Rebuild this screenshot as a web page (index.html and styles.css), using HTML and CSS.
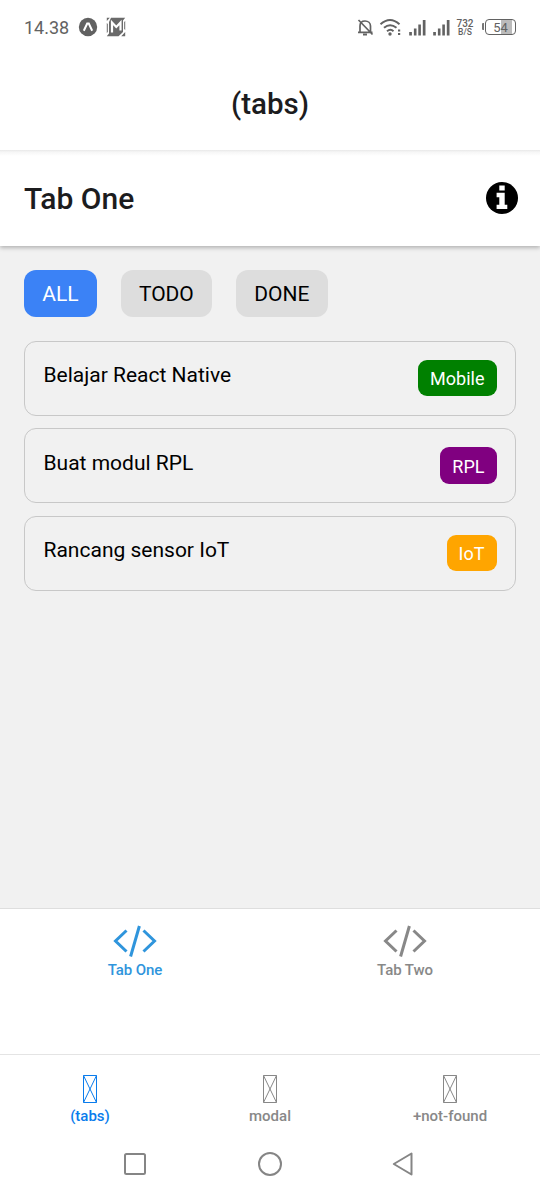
FILE: index.html
```html
<!DOCTYPE html>
<html lang="id">
<head>
<meta charset="utf-8">
<meta name="viewport" content="width=device-width, initial-scale=1">
<title>Tab One</title>
<link rel="stylesheet" href="styles.css">
</head>
<body>
<div class="screen">
  <div class="status">
    <div class="status-left">
      <span class="clock">14.38</span>
      <svg class="app-icon" width="20" height="20" viewBox="0 0 20 20"><circle cx="10" cy="10" r="9.2" fill="#616161"/><path d="M5.8 13.8 9.2 6.6h1.6l3.4 7.2" fill="none" stroke="#fff" stroke-width="2"/></svg>
      <svg class="app-icon-m" width="20" height="20" viewBox="0 0 20 20"><path d="M5 .8h14.200L17 3.500v11.500L12.500 19.200H.8L3 16.500V5z" fill="#6a6a6a"/><path d="M.8.800h3L.8 4zM.8 6l1 1v8l-1 1zM19.200 4v9l-1-1V5zM19.200 15v4.200h-4z" fill="#6a6a6a"/><path d="M6 15.500V5.500l4.300 4.500 4.200-4.500v8" fill="none" stroke="#fff" stroke-width="2.200"/></svg>
    </div>
    <div class="status-right">
      <svg width="17" height="19" viewBox="0 0 17 19" fill="none" stroke="#626262" stroke-width="1.700"><path d="M3 14V8c0-3 2-5 5-5s5.500 2 5.500 5v6M1 14.300h14.500M1.500 2l14 14.500"/><path d="M6 16.500h4" stroke-width="2"/></svg>
      <svg class="wifi" width="22" height="19" viewBox="0 0 22 19" fill="none" stroke="#626262" stroke-width="2"><path d="M.5 6.200q9.500-8.500 19 0M4 9.800q6-5.200 12.500 0M7 13.200q3.500-2.800 6.500 0"/><circle cx="10" cy="16" r="1.700" fill="#626262" stroke="none"/><path d="M18 12.500h2.200M18 16h2.200"/></svg>
      <svg class="signal" width="17" height="17" viewBox="0 0 17 17" fill="#626262"><path d="M.2 13H2.900v3.500H.2zM4.900 9.500h2.600v7H4.900zM9.300 5.500h2.600v11H9.300zM13.800 1h2.700v15.500h-2.700z"/></svg>
      <svg class="signal" width="17" height="17" viewBox="0 0 17 17" fill="#626262"><path d="M.2 13H2.900v3.500H.2zM4.900 9.500h2.600v7H4.900zM9.300 5.500h2.600v11H9.300zM13.800 1h2.700v15.500h-2.700z"/></svg>
      <div class="speed"><span>732</span><span>B/S</span></div>
      <div class="battery"><span>54</span></div>
    </div>
  </div>

  <header class="root-header"><h1>(tabs)</h1></header>
  <header class="tab-header">
    <h2>Tab One</h2>
    <svg width="32" height="32" viewBox="0 0 32 32"><circle cx="16" cy="16" r="16"/><path d="M13.300 3.500h5.400v5h-5.400zM10.600 10.800h8.100v11.900h2.600V27H10.600v-4.300h2.700v-7.500h-2.700z" fill="#fff"/></svg>
  </header>

  <main class="content">
    <div class="filters">
      <button class="filter active">ALL</button>
      <button class="filter">TODO</button>
      <button class="filter">DONE</button>
    </div>
    <div class="card"><span class="task">Belajar React Native</span><span class="tag mobile">Mobile</span></div>
    <div class="card"><span class="task">Buat modul RPL</span><span class="tag rpl">RPL</span></div>
    <div class="card"><span class="task">Rancang sensor IoT</span><span class="tag iot">IoT</span></div>
  </main>

  <nav class="inner-tabs">
    <div class="tab selected">
      <svg width="44" height="34" viewBox="0 0 44 34" fill="none" stroke="currentColor" stroke-width="3"><path d="M13.500 6.500 2.500 17l11 10.500M30.500 6.500l11 10.500-11 10.500M26.400 2 17.600 32.500"/></svg>
      <span>Tab One</span>
    </div>
    <div class="tab">
      <svg width="44" height="34" viewBox="0 0 44 34" fill="none" stroke="currentColor" stroke-width="3"><path d="M13.500 6.500 2.500 17l11 10.500M30.500 6.500l11 10.500-11 10.500M26.400 2 17.600 32.500"/></svg>
      <span>Tab Two</span>
    </div>
  </nav>

  <nav class="root-tabs">
    <div class="root-tab current"><svg width="14" height="28" viewBox="0 0 14 28" fill="none" stroke="currentColor"><path d="M.5.500h13v27H.500zl13 27M13.500.500l-13 27"/></svg><span>(tabs)</span></div>
    <div class="root-tab"><svg width="14" height="28" viewBox="0 0 14 28" fill="none" stroke="currentColor"><path d="M.5.500h13v27H.500zl13 27M13.500.500l-13 27"/></svg><span>modal</span></div>
    <div class="root-tab"><svg width="14" height="28" viewBox="0 0 14 28" fill="none" stroke="currentColor"><path d="M.5.500h13v27H.500zl13 27M13.500.500l-13 27"/></svg><span>+not-found</span></div>
  </nav>

  <div class="system-nav">
    <svg width="24" height="24" viewBox="0 0 24 24"><rect x="2" y="2" width="20" height="20" rx="1.500"/></svg>
    <svg width="24" height="24" viewBox="0 0 24 24"><circle cx="12" cy="12" r="11"/></svg>
    <svg width="24" height="24" viewBox="0 0 24 24"><path d="M18.500 1.500v21L.8 12z" stroke-linejoin="round"/></svg>
  </div>
</div>
</body>
</html>
```
FILE: styles.css
```css
* { box-sizing: border-box; }
body { margin: 0; font-family: Roboto, "Liberation Sans", sans-serif; color: #000; background: #fff; }
svg { display: block; flex: none; overflow: visible; }
h1, h2 { margin: 0; font-weight: 500; color: #1c1c1e; }

.screen { width: 540px; height: 1200px; display: flex; flex-direction: column; overflow: hidden; }

.status { height: 54px; flex: none; display: flex; justify-content: space-between; padding: 0 24px; color: #626262; }
.status-left, .status-right { display: flex; align-items: center; }
.clock { font-size: 18px; line-height: 20px; width: 46px; margin-right: 8px; padding-top: 2px; }
.app-icon-m { margin-left: 8px; }
.wifi { margin-left: 6px; }
.signal { margin-left: 7px; }
.speed { display: flex; flex-direction: column; align-items: center; margin-left: 6px; width: 18px; padding-top: 2px; font-size: 10px; line-height: 9px; font-weight: 500; }
.speed span + span { font-size: 8.500px; }
.battery { width: 31px; height: 16px; margin-left: 11px; border: 1.500px solid #626262; border-radius: 4px; background: linear-gradient(90deg, #fff 52%, #bbb 52%, #bbb 91%, #fff 91%); font-size: 13px; line-height: 15px; text-align: center; position: relative; }
.battery::before { content: ""; position: absolute; left: -4px; top: 3px; width: 2px; height: 7px; background: #777; border-radius: 1px 0 0 1px; }

.root-header { height: 96px; flex: none; display: flex; align-items: center; justify-content: center; padding-top: 4px; }
.root-header h1 { font-size: 29.500px; line-height: 36px; }
.tab-header { height: 96px; flex: none; display: flex; align-items: center; justify-content: space-between; padding: 0 22.500px 0 24px; background: linear-gradient(#e8e8e8, #f6f6f6 2px, #fff 6px); box-shadow: 0 2px 4px rgba(0, 0, 0, .25); position: relative; clip-path: inset(0 0 -8px 0); }
.tab-header h2 { font-size: 30px; line-height: 36px; padding-top: 2px; }

.content { height: 662px; flex: none; padding: 24px; background: #f1f1f1; }
.filters { display: flex; gap: 24px; margin-bottom: 24px; }
.filter { border: 0; margin: 0; height: 46.500px; padding: 3px 18.200px 0; border-radius: 12px; font: 21px/25px Roboto, sans-serif; background: #ddd; color: #000; }
.filter.active { background: #3b82f6; color: #fff; }
.card { height: 75px; margin-bottom: 12.500px; padding: 18px 18.500px; border: 1.500px solid #c8c8c8; border-radius: 12px; display: flex; align-items: flex-start; justify-content: space-between; }
.task { font-size: 21px; line-height: 25px; padding-top: 3.500px; }
.tag { height: 36.500px; padding: 8.500px 12px 0; border-radius: 9px; font-size: 18px; line-height: 22px; color: #fff; }
.mobile { background: #008000; }
.rpl { background: #800080; }
.iot { background: #ffa500; }

.inner-tabs { height: 146px; flex: none; display: flex; border-top: 1px solid #dedede; }
.tab { flex: 1; display: flex; flex-direction: column; align-items: center; padding-top: 15px; color: #888; font-size: 15px; line-height: 18px; font-weight: 500; letter-spacing: -.1px; }
.tab span { margin-top: 3px; }
.tab.selected { color: #2f95dc; }

.root-tabs { height: 78px; flex: none; display: flex; border-top: 1px solid #e4e4e4; }
.root-tab { flex: 1; display: flex; flex-direction: column; align-items: center; padding-top: 20px; color: #888; font-size: 15px; line-height: 18px; font-weight: 500; }
.root-tab span { margin-top: 4px; }
.root-tab.current { color: #0a7cec; }

.system-nav { flex: 1; display: flex; gap: 111px; justify-content: center; padding-top: 20px; fill: none; stroke: #858585; stroke-width: 2; }
```
